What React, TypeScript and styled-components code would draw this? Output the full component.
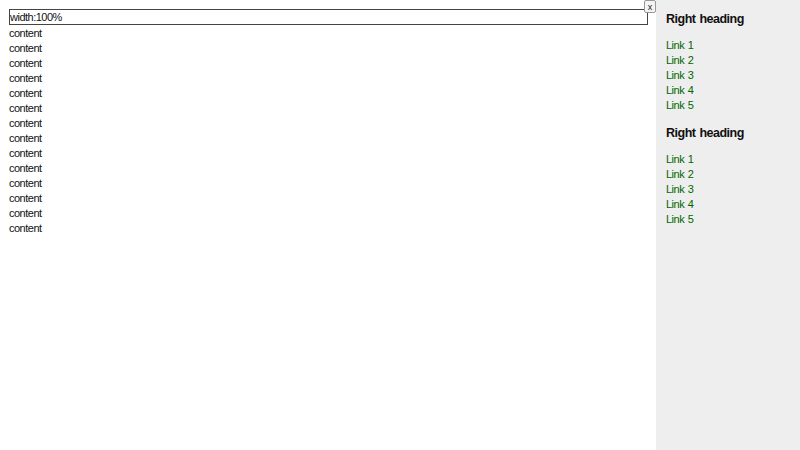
import React from 'react';
import styled, { createGlobalStyle } from 'styled-components';

const GlobalStyle = createGlobalStyle`
  html, body {
    margin: 0;
    padding: 0;
    height: 100%;
    background: #fff;
  }
  body {
    font-family: "Liberation Sans", Arial, sans-serif;
    font-size: 11px;
    letter-spacing: -0.5px;
    word-spacing: 1px;
    line-height: 15px;
    color: #111;
  }
  #root {
    height: 100%;
  }
`;

const sections = [
  { heading: 'Right heading', links: ['Link 1', 'Link 2', 'Link 3', 'Link 4', 'Link 5'] },
  { heading: 'Right heading', links: ['Link 1', 'Link 2', 'Link 3', 'Link 4', 'Link 5'] },
];

const contentLines = Array.from({ length: 14 }, () => 'content');

export default function App() {
  return (
    <>
      <GlobalStyle />
      <Page>
        <Main>
          <InputWrap>
            <WideInput defaultValue="width:100%" />
            <CloseButton>x</CloseButton>
          </InputWrap>
          {contentLines.map((line, i) => (
            <ContentLine key={i}>{line}</ContentLine>
          ))}
        </Main>
        <Sidebar>
          {sections.map((section, i) => (
            <Section key={i}>
              <Heading>{section.heading}</Heading>
              <LinkList>
                {section.links.map((link) => (
                  <li key={link}>
                    <SideLink href="#">{link}</SideLink>
                  </li>
                ))}
              </LinkList>
            </Section>
          ))}
        </Sidebar>
      </Page>
    </>
  );
}

const Page = styled.div`
  display: flex;
  height: 100%;
  min-height: 450px;
`;

const Main = styled.div`
  flex: 1;
  padding: 9px 8px 0 9px;
  min-width: 0;
`;

const InputWrap = styled.div`
  position: relative;
`;

const WideInput = styled.input`
  display: block;
  box-sizing: border-box;
  width: 100%;
  height: 16px;
  margin: 0;
  padding: 0;
  border: 1px solid #444;
  font-family: "Liberation Sans", Arial, sans-serif;
  font-size: 11px;
  letter-spacing: -0.5px;
  line-height: 14px;
  color: #111;
  background: #fff;
  outline: none;
`;

const CloseButton = styled.button`
  position: absolute;
  top: -9px;
  right: -8px;
  box-sizing: border-box;
  width: 12px;
  height: 13px;
  padding: 0;
  border: 1px solid #999;
  border-radius: 2px;
  background: #f4f4f4;
  font-family: "Liberation Sans", Arial, sans-serif;
  font-size: 9px;
  letter-spacing: 0;
  line-height: 10px;
  color: #222;
  cursor: pointer;
`;

const ContentLine = styled.div`
  line-height: 15px;
  padding-top: 1px;
  height: 14px;
`;

const Sidebar = styled.aside`
  width: 144px;
  flex-shrink: 0;
  box-sizing: border-box;
  padding: 12px 10px;
  background: #eeeeee;
`;

const Section = styled.section`
  margin-bottom: 13px;
`;

const Heading = styled.h3`
  margin: 0 0 11px;
  font-size: 12.5px;
  letter-spacing: -0.5px;
  line-height: 15px;
  font-weight: 700;
  color: #111;
`;

const LinkList = styled.ul`
  list-style: none;
  margin: 0;
  padding: 0;
  line-height: 15px;
`;

const SideLink = styled.a`
  color: #006600;
  text-decoration: none;
`;
